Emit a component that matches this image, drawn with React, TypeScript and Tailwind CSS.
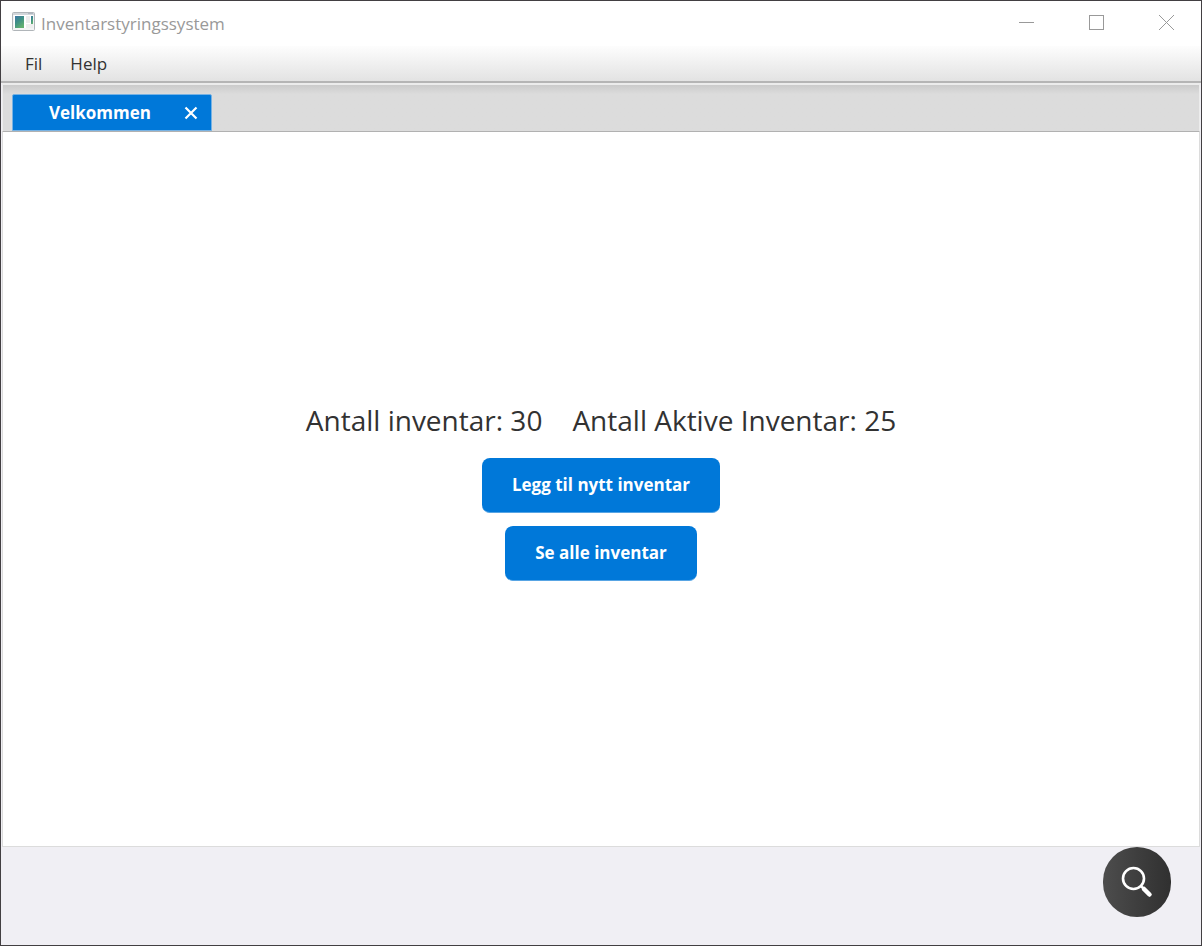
import React from "react";

function AppIcon() {
  return (
    <svg width="23" height="19" viewBox="0 0 23 19" aria-hidden="true">
      <defs>
        <linearGradient id="pane" x1="0" y1="0" x2="0.6" y2="1">
          <stop offset="0" stopColor="#3f76a6" />
          <stop offset="0.5" stopColor="#3f9085" />
          <stop offset="1" stopColor="#62b070" />
        </linearGradient>
      </defs>
      <rect x="0.5" y="0.5" width="22" height="18" rx="1" fill="#f3f4f5" stroke="#b0b5b9" />
      <rect x="1" y="1" width="21" height="2" fill="#d2d6da" />
      <rect x="16" y="1" width="5" height="1" fill="#b0b8c2" />
      <rect x="2" y="3" width="19" height="13" fill="#fff" />
      <rect x="3" y="4" width="9" height="12" fill="url(#pane)" />
      <rect x="14" y="4" width="4" height="7" fill="#ececec" />
      <rect x="14" y="12" width="7" height="4" fill="#eeeeee" />
      <rect x="19" y="4" width="2" height="8" fill="url(#pane)" />
    </svg>
  );
}

function TitleBar() {
  const control = "flex h-[43px] w-[70px] items-center justify-center text-[#999]";
  return (
    <header className="flex h-[45px] items-start justify-between bg-white pl-[11px]">
      <div className="flex h-[41px] items-center gap-1.5">
        <AppIcon />
        <h1 className="mt-1 text-[17px] leading-6 text-[#999]">Inventarstyringssystem</h1>
      </div>
      <div className="flex">
        <button type="button" aria-label="Minimer" className={control}>
          <svg width="15" height="15" viewBox="0 0 15 15" fill="none" stroke="currentColor">
            <path d="M0 7.5h15" />
          </svg>
        </button>
        <button type="button" aria-label="Maksimer" className={control}>
          <svg width="15" height="15" viewBox="0 0 15 15" fill="none" stroke="currentColor">
            <rect x="0.5" y="0.5" width="14" height="14" />
          </svg>
        </button>
        <button type="button" aria-label="Lukk" className={control}>
          <svg width="15" height="15" viewBox="0 0 15 15" fill="none" stroke="currentColor">
            <path d="M0 0l15 15M15 0L0 15" />
          </svg>
        </button>
      </div>
    </header>
  );
}

function MenuBar() {
  return (
    <nav className="flex h-[35px] items-center gap-7 bg-linear-to-b from-[#fdfdfd] to-[#e3e3e3] pl-6 text-[17px] leading-6 text-[#323232]">
      <button type="button">Fil</button>
      <button type="button">Help</button>
    </nav>
  );
}

function TabStrip() {
  return (
    <div className="flex h-[49px] items-end border border-t-2 border-b-[#b1b1b1] border-t-[#ececec] border-x-[#ececec] bg-linear-to-b from-[#cbcbcb] via-[#dcdcdc] via-20% to-[#dcdcdc] pl-[9px]">
      <div className="flex h-[37px] w-[200px] items-center rounded-t-xs border border-[#77b2e3] bg-[#0078d9] pr-3 pl-9 text-white">
        <button type="button" role="tab" aria-selected="true" className="flex-1 text-left text-[17px] leading-6 font-bold">
          Velkommen
        </button>
        <button type="button" aria-label="Lukk fane" className="flex size-4 items-center justify-center">
          <svg width="14" height="14" viewBox="0 0 14 14" fill="none" stroke="currentColor" strokeWidth="2.2">
            <path d="M1.5 1.5l11 11M12.5 1.5l-11 11" />
          </svg>
        </button>
      </div>
    </div>
  );
}

function ActionButton({ children }: { children: React.ReactNode }) {
  return (
    <button
      type="button"
      className="h-[55px] rounded-lg border-b border-[#58a5e4] bg-[#0078d9] px-[30px] text-[17px] leading-6 font-bold text-white"
    >
      {children}
    </button>
  );
}

export default function App() {
  return (
    <div className="flex min-h-screen flex-col border border-[#423f42] bg-[#f0eff4] font-['Open_Sans','Noto_Sans',sans-serif]">
      <TitleBar />
      <MenuBar />
      <div className="flex flex-1 flex-col border-t-2 border-t-[#b5b5b5] px-px">
        <TabStrip />
        <main className="flex flex-1 flex-col items-center justify-center gap-[13px] border border-t-0 border-[#dcdcdc] bg-white">
          <div className="flex flex-wrap justify-center gap-x-[30px] pb-0.5 text-[28px] leading-[46px] text-[#323232]">
            <p>Antall inventar: 30</p>
            <p>Antall Aktive Inventar: 25</p>
          </div>
          <ActionButton>Legg til nytt inventar</ActionButton>
          <ActionButton>Se alle inventar</ActionButton>
        </main>
      </div>
      <footer className="flex h-[98px] items-start justify-end pr-[30px]">
        <button
          type="button"
          aria-label="Søk"
          className="flex h-[70px] w-[68px] items-center justify-center rounded-full bg-linear-to-r from-[#4d4d4d] to-[#303030] text-white"
        >
          <svg width="32" height="32" viewBox="0 0 32 32" fill="none" stroke="currentColor">
            <circle cx="12.5" cy="12.5" r="10.5" strokeWidth="2.6" />
            <path d="M19.8 19.8l3 3" strokeWidth="2.6" />
            <path d="M23 23l5.5 5.5" strokeWidth="4.5" strokeLinecap="round" />
          </svg>
        </button>
      </footer>
    </div>
  );
}
